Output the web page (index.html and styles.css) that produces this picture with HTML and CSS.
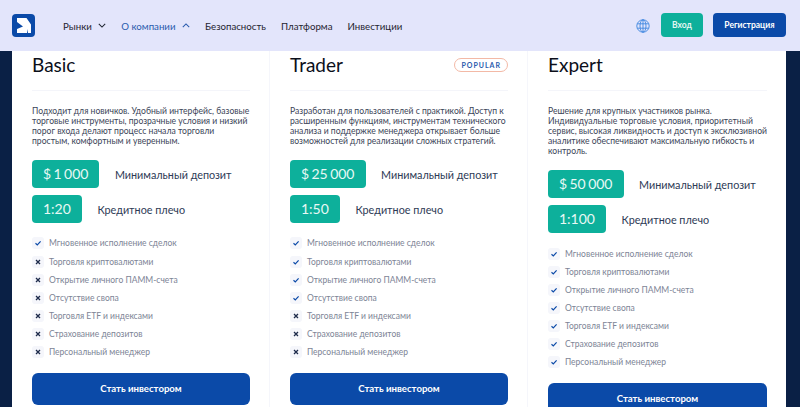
FILE: index.html
```html
<!DOCTYPE html>
<html>
<head>
    <meta charset="UTF-8">
    <title>Тарифы</title>
    <link rel="stylesheet" href="styles.css">
</head>
<body>
<header class="top">
    <svg class="logo" viewBox="0 0 23 23">
        <rect width="23" height="23" rx="4" fill="#0b4aa8"/>
        <path d="M5 4h9.500l4.500 6.500V19h-3v-4l-1 4H5v-4l6-2.500L5 8z" fill="#fff"/>
    </svg>
    <nav class="nav">
        <a>Рынки <svg class="arrow" viewBox="0 0 10 6"><path d="M1 1l4 4 4-4"/></svg></a>
        <a class="active">О компании <svg class="arrow" viewBox="0 0 10 6"><path d="M1 5l4-4 4 4"/></svg></a>
        <a>Безопасность</a>
        <a>Платформа</a>
        <a>Инвестиции</a>
    </nav>
    <svg class="globe" viewBox="0 0 14 14">
        <circle cx="7" cy="7" r="6.200"/>
        <ellipse cx="7" cy="7" rx="3" ry="6.200"/>
        <path d="M7 .8v12.400M1.300 4.800h11.400M1.300 9.200h11.400"/>
    </svg>
    <a class="btn-login">Вход</a>
    <a class="btn-reg">Регистрация</a>
</header>

<div class="panel">
    <section class="plan">
        <div class="plan-head"><h2>Basic</h2></div>
        <p class="desc">Подходит для новичков. Удобный интерфейс, базовые торговые инструменты, прозрачные условия и низкий порог входа делают процесс начала торговли простым, комфортным и уверенным.</p>
        <div class="stat"><span class="chip">$ 1 000</span><span class="stat-name">Минимальный депозит</span></div>
        <div class="stat"><span class="chip">1:20</span><span class="stat-name">Кредитное плечо</span></div>
        <ul class="features">
            <li><svg class="ico" viewBox="0 0 12 12"><path class="yes" d="M3.500 6.200l1.800 1.700 3.300-3.500"/></svg>Мгновенное исполнение сделок</li>
            <li><svg class="ico" viewBox="0 0 12 12"><path class="no" d="M4 4l4 4M8 4l-4 4"/></svg>Торговля криптовалютами</li>
            <li><svg class="ico" viewBox="0 0 12 12"><path class="no" d="M4 4l4 4M8 4l-4 4"/></svg>Открытие личного ПАММ-счета</li>
            <li><svg class="ico" viewBox="0 0 12 12"><path class="no" d="M4 4l4 4M8 4l-4 4"/></svg>Отсутствие свопа</li>
            <li><svg class="ico" viewBox="0 0 12 12"><path class="no" d="M4 4l4 4M8 4l-4 4"/></svg>Торговля ETF и индексами</li>
            <li><svg class="ico" viewBox="0 0 12 12"><path class="no" d="M4 4l4 4M8 4l-4 4"/></svg>Страхование депозитов</li>
            <li><svg class="ico" viewBox="0 0 12 12"><path class="no" d="M4 4l4 4M8 4l-4 4"/></svg>Персональный менеджер</li>
        </ul>
        <a class="btn-invest">Стать инвестором</a>
    </section>

    <section class="plan">
        <div class="plan-head"><h2>Trader</h2><span class="badge">POPULAR</span></div>
        <p class="desc">Разработан для пользователей с практикой. Доступ к расширенным функциям, инструментам технического анализа и поддержке менеджера открывает больше возможностей для реализации сложных стратегий.</p>
        <div class="stat"><span class="chip">$ 25 000</span><span class="stat-name">Минимальный депозит</span></div>
        <div class="stat"><span class="chip">1:50</span><span class="stat-name">Кредитное плечо</span></div>
        <ul class="features">
            <li><svg class="ico" viewBox="0 0 12 12"><path class="yes" d="M3.500 6.200l1.800 1.700 3.300-3.500"/></svg>Мгновенное исполнение сделок</li>
            <li><svg class="ico" viewBox="0 0 12 12"><path class="yes" d="M3.500 6.200l1.800 1.700 3.300-3.500"/></svg>Торговля криптовалютами</li>
            <li><svg class="ico" viewBox="0 0 12 12"><path class="yes" d="M3.500 6.200l1.800 1.700 3.300-3.500"/></svg>Открытие личного ПАММ-счета</li>
            <li><svg class="ico" viewBox="0 0 12 12"><path class="yes" d="M3.500 6.200l1.800 1.700 3.300-3.500"/></svg>Отсутствие свопа</li>
            <li><svg class="ico" viewBox="0 0 12 12"><path class="no" d="M4 4l4 4M8 4l-4 4"/></svg>Торговля ETF и индексами</li>
            <li><svg class="ico" viewBox="0 0 12 12"><path class="no" d="M4 4l4 4M8 4l-4 4"/></svg>Страхование депозитов</li>
            <li><svg class="ico" viewBox="0 0 12 12"><path class="no" d="M4 4l4 4M8 4l-4 4"/></svg>Персональный менеджер</li>
        </ul>
        <a class="btn-invest">Стать инвестором</a>
    </section>

    <section class="plan">
        <div class="plan-head"><h2>Expert</h2></div>
        <p class="desc">Решение для крупных участников рынка. Индивидуальные торговые условия, приоритетный сервис, высокая ликвидность и доступ к эксклюзивной аналитике обеспечивают максимальную гибкость и контроль.</p>
        <div class="stat"><span class="chip">$ 50 000</span><span class="stat-name">Минимальный депозит</span></div>
        <div class="stat"><span class="chip">1:100</span><span class="stat-name">Кредитное плечо</span></div>
        <ul class="features">
            <li><svg class="ico" viewBox="0 0 12 12"><path class="yes" d="M3.500 6.200l1.800 1.700 3.300-3.500"/></svg>Мгновенное исполнение сделок</li>
            <li><svg class="ico" viewBox="0 0 12 12"><path class="yes" d="M3.500 6.200l1.800 1.700 3.300-3.500"/></svg>Торговля криптовалютами</li>
            <li><svg class="ico" viewBox="0 0 12 12"><path class="yes" d="M3.500 6.200l1.800 1.700 3.300-3.500"/></svg>Открытие личного ПАММ-счета</li>
            <li><svg class="ico" viewBox="0 0 12 12"><path class="yes" d="M3.500 6.200l1.800 1.700 3.300-3.500"/></svg>Отсутствие свопа</li>
            <li><svg class="ico" viewBox="0 0 12 12"><path class="yes" d="M3.500 6.200l1.800 1.700 3.300-3.500"/></svg>Торговля ETF и индексами</li>
            <li><svg class="ico" viewBox="0 0 12 12"><path class="yes" d="M3.500 6.200l1.800 1.700 3.300-3.500"/></svg>Страхование депозитов</li>
            <li><svg class="ico" viewBox="0 0 12 12"><path class="yes" d="M3.500 6.200l1.800 1.700 3.300-3.500"/></svg>Персональный менеджер</li>
        </ul>
        <a class="btn-invest">Стать инвестором</a>
    </section>
</div>
</body>
</html>
```

FILE: styles.css
```css
html, body {
    margin: 0;
    padding: 0;
    height: 100%;
    overflow: hidden;
}

body {
    background: #0a2045;
    font-family: Lato, "Open Sans", "Noto Sans", sans-serif;
    color: #1d2a4a;
}

.top {
    display: flex;
    align-items: center;
    height: 51px;
    padding: 0 14px 0 12px;
    background: #e3e5fb;
}

.logo {
    width: 23px;
    height: 23px;
    margin-right: 28px;
    margin-top: -1px;
}

.nav {
    display: flex;
    gap: 15px;
    flex: 1;
    font-size: 9.700px;
    color: #1f2430;
}

.nav a {
    display: flex;
    align-items: center;
}

.nav .active {
    color: #2a5bad;
}

.arrow {
    width: 8px;
    height: 5px;
    margin-left: 6.500px;
    fill: none;
    stroke: currentColor;
    stroke-width: 1.300;
}

.globe {
    width: 14px;
    height: 14px;
    margin-right: 11px;
    fill: none;
    stroke: #3d86e0;
    stroke-width: .9;
}

.btn-login, .btn-reg {
    display: flex;
    align-items: center;
    justify-content: center;
    height: 24px;
    border-radius: 4px;
    font-size: 8.500px;
    font-weight: 700;
    margin-top: -1px;
}

.btn-login {
    width: 42px;
    margin-right: 10px;
    background: #0db09b;
    color: #e3f6f2;
}

.btn-reg {
    width: 73px;
    background: #0b4aa8;
    color: #fff;
}

.panel {
    display: grid;
    grid-template-columns: repeat(3, 258px);
    margin: 0 14px 0 12px;
    background: #fff;
    height: 356px;
}

.plan {
    padding: 0 19px 0 20px;
    border-right: 1px solid #f5f6fb;
    box-sizing: border-box;
}

.plan:last-child {
    border-right: 0;
}

.plan-head {
    display: flex;
    align-items: center;
    justify-content: space-between;
    height: 39px;
    border-bottom: 1px solid #f4f5fa;
}

.plan-head h2 {
    margin: 0 0 11px;
    font-size: 19px;
    font-weight: 400;
    line-height: 26px;
    color: #0c0f1a;
}

.badge {
    margin-bottom: 12px;
    padding: 0 6px;
    height: 12px;
    line-height: 12px;
    border: 1px solid #f3b9a6;
    border-radius: 8px;
    font-size: 7px;
    font-weight: 700;
    letter-spacing: 1px;
    color: #2a5bad;
}

.desc {
    margin: 15px 0 14px;
    font-size: 8.600px;
    line-height: 10.100px;
    color: #3b4558;
}

.stat {
    display: flex;
    align-items: center;
    gap: 15.500px;
    margin-bottom: 7px;
    white-space: nowrap;
}

.chip {
    padding: 0 11px;
    height: 28px;
    line-height: 28px;
    border-radius: 4px;
    background: #0db09b;
    color: #e8f8f5;
    font-size: 14px;
    word-spacing: -1.200px;
}

.stat-name {
    font-size: 10.800px;
    color: #2d3a55;
}

.features {
    margin: 11px 0 0;
    padding: 0;
    list-style: none;
}

.features li {
    display: flex;
    align-items: center;
    gap: 5px;
    height: 18.150px;
    font-size: 8.500px;
    color: #7d8496;
}

.ico {
    width: 12px;
    height: 12px;
    border-radius: 3px;
    background: #f5f6fb;
    flex: none;
}

.ico path {
    fill: none;
    stroke-width: 1.200;
}

.yes {
    stroke: #0b4aa8;
}

.no {
    stroke: #1d2a4a;
    stroke-width: 1.300 !important;
}

.btn-invest {
    display: flex;
    align-items: center;
    justify-content: center;
    height: 32px;
    margin-top: 11.500px;
    border-radius: 6px;
    background: #0b4aa8;
    color: #fff;
    font-size: 9.600px;
    font-weight: 700;
}
```
